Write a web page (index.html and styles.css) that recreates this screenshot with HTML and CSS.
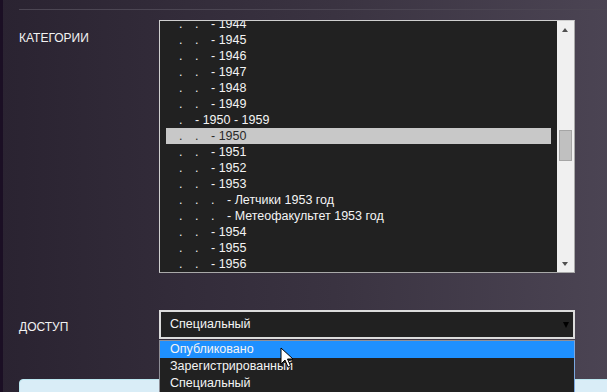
FILE: index.html
```html
<!DOCTYPE html>
<html>
<head>
<meta charset="utf-8">
<link rel="stylesheet" href="styles.css">
</head>
<body>
<div class="page">
  <div class="sep"></div>
  <div class="field">
    <div class="label">КАТЕГОРИИ</div>
    <div class="listbox">
      <div class="items">
        <div class="opt"><span class="d">.</span><span class="d">.</span>- 1944</div>
        <div class="opt"><span class="d">.</span><span class="d">.</span>- 1945</div>
        <div class="opt"><span class="d">.</span><span class="d">.</span>- 1946</div>
        <div class="opt"><span class="d">.</span><span class="d">.</span>- 1947</div>
        <div class="opt"><span class="d">.</span><span class="d">.</span>- 1948</div>
        <div class="opt"><span class="d">.</span><span class="d">.</span>- 1949</div>
        <div class="opt"><span class="d">.</span>- 1950 - 1959</div>
        <div class="opt sel"><span class="d">.</span><span class="d">.</span>- 1950</div>
        <div class="opt"><span class="d">.</span><span class="d">.</span>- 1951</div>
        <div class="opt"><span class="d">.</span><span class="d">.</span>- 1952</div>
        <div class="opt"><span class="d">.</span><span class="d">.</span>- 1953</div>
        <div class="opt"><span class="d">.</span><span class="d">.</span><span class="d">.</span>- Летчики 1953 год</div>
        <div class="opt"><span class="d">.</span><span class="d">.</span><span class="d">.</span>- Метеофакультет 1953 год</div>
        <div class="opt"><span class="d">.</span><span class="d">.</span>- 1954</div>
        <div class="opt"><span class="d">.</span><span class="d">.</span>- 1955</div>
        <div class="opt"><span class="d">.</span><span class="d">.</span>- 1956</div>
        <div class="opt"><span class="d">.</span><span class="d">.</span>- 1957</div>
      </div>
      <div class="scrollbar">
        <span class="arrow up"></span>
        <span class="thumb"></span>
        <span class="arrow down"></span>
      </div>
    </div>
  </div>
  <div class="field access">
    <div class="label">ДОСТУП</div>
    <div class="select">
      <div class="current">Специальный<span class="caret"></span></div>
      <div class="dropdown">
        <div class="ditem hl">Опубликовано</div>
        <div class="ditem">Зарегистрированный</div>
        <div class="ditem">Специальный</div>
      </div>
      <svg class="cursor" width="14" height="22" viewBox="0 0 14 22">
        <path d="M1 1 L1 17 L5 13 L8 20 L10.5 19 L7.5 12 L13 12 Z" fill="#fff" stroke="#000" stroke-width="1" stroke-linejoin="miter"/>
      </svg>
    </div>
  </div>
  <div class="notice"></div>
</div>
</body>
</html>
```
FILE: styles.css
```css
html, body {
  margin: 0;
  padding: 0;
  height: 392px;
  overflow: hidden;
}
body {
  background: linear-gradient(to right, #2a2331 0%, #3a3341 55%, #4b4453 100%);
  font-family: "Liberation Sans", Arial, sans-serif;
  font-size: 12px;
  color: #f2f2f2;
}
.page {
  border-left: 3px solid #1b0f24;
  padding: 9px 0 0 16px;
  height: 392px;
  box-sizing: border-box;
}
.sep {
  height: 1px;
  background: #4c4653;
}
.field {
  display: flex;
  margin-top: 10px;
}
.label {
  width: 140px;
  padding-top: 10px;
  line-height: 16px;
  flex: none;
}
.listbox {
  position: relative;
  width: 416px;
  height: 253px;
  box-sizing: border-box;
  border: 1px solid #cfcfcf;
  border-right-color: #a9a9a9;
  border-bottom-color: #a9a9a9;
  background: #212121;
  overflow: hidden;
  display: flex;
}
.items {
  flex: 1;
  margin-top: -5px;
  padding: 0 6px;
}
.opt {
  height: 16px;
  line-height: 16px;
  padding-left: 13px;
  white-space: nowrap;
  font-size: 12.5px;
  color: #f4f4f4;
}
.opt.sel {
  background: #c8c8c8;
  color: #2a2a2a;
}
.d {
  display: inline-block;
  width: 16px;
}
.scrollbar {
  position: relative;
  width: 17px;
  flex: none;
  background: #f0f0f0;
}
.arrow {
  position: absolute;
  left: 5px;
  width: 0;
  height: 0;
  border-left: 3.5px solid transparent;
  border-right: 3.5px solid transparent;
}
.arrow.up {
  top: 7px;
  border-bottom: 4px solid #505050;
}
.arrow.down {
  bottom: 6px;
  border-top: 4px solid #505050;
}
.thumb {
  position: absolute;
  left: 2px;
  top: 109px;
  width: 11px;
  height: 29px;
  background: #c0c0c0;
  border: 1px solid #a5a5a5;
}
.access {
  margin-top: 37px;
}
.access .label {
  padding-top: 9px;
}
.select {
  position: relative;
  width: 416px;
  z-index: 2;
}
.current {
  position: relative;
  height: 29px;
  box-sizing: border-box;
  border: 2px solid #dcdcdc;
  background: #212121;
  padding-left: 9px;
  line-height: 25px;
  font-size: 12.5px;
  color: #f4f4f4;
}
.caret {
  position: absolute;
  right: 4px;
  top: 10px;
  width: 0;
  height: 0;
  border-left: 3.5px solid transparent;
  border-right: 3.5px solid transparent;
  border-top: 6px solid #000;
}
.dropdown {
  position: absolute;
  top: 30px;
  left: 0;
  width: 416px;
  box-sizing: border-box;
  border: 1px solid #8e8e96;
  border-right-color: #7aa7e0;
  background: #212121;
}
.ditem {
  height: 17px;
  line-height: 17px;
  padding-left: 10px;
  font-size: 12.5px;
  color: #f4f4f4;
}
.ditem.hl {
  background: #1e90ff;
}
.cursor {
  position: absolute;
  left: 121px;
  top: 37px;
}
.notice {
  margin-top: 40px;
  width: 620px;
  height: 40px;
  background: #d9edf7;
  border: 1px solid #bce8f1;
  border-radius: 4px;
}
```
